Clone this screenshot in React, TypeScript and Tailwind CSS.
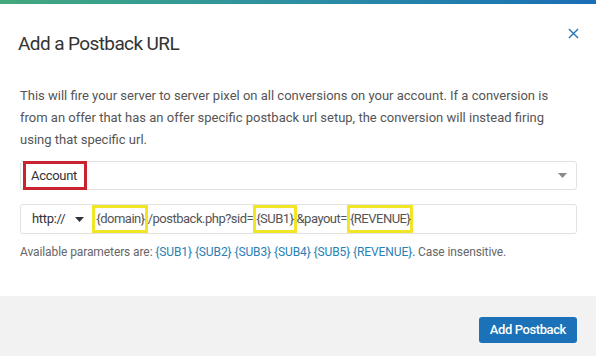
import React from 'react';

const Caret = ({ color }: { color: string }) => (
  <svg width="9" height="5" viewBox="0 0 9 5" className="shrink-0">
    <path d="M0 0 L9 0 L4.5 5 Z" fill={color} />
  </svg>
);

export default function App() {
  const params = ['{SUB1}', '{SUB2}', '{SUB3}', '{SUB4}', '{SUB5}', '{REVENUE}'];

  return (
    <div
      className="w-[596px] h-[356px] bg-white flex flex-col overflow-hidden"
      style={{ fontFamily: 'Roboto, "Liberation Sans", sans-serif' }}
    >
      {/* top accent bar */}
      <div className="h-[4px] w-full bg-gradient-to-r from-[#43a87c] via-[#2d8fa3] to-[#1c6db5]" />

      {/* header */}
      <div className="flex items-start justify-between pl-[18px] pr-[17px] pt-[27px]">
        <h3 className="text-[19px] leading-[26px] text-[#333] tracking-[-0.6px]">Add a Postback URL</h3>
        <button className="-mt-[3px] text-[#2c78b8]">
          <svg width="11" height="11" viewBox="0 0 12 12">
            <path d="M1 1 L11 11 M11 1 L1 11" stroke="currentColor" strokeWidth="1.6" fill="none" />
          </svg>
        </button>
      </div>

      {/* body */}
      <div className="px-[20px] pt-[28px] flex flex-col">
        <p className="text-[13px] leading-[22px] text-[#555]">
          This will fire your server to server pixel on all conversions on your account. If a conversion is
          <br />
          from an offer that has an offer specific postback url setup, the conversion will instead firing
          <br />
          using that specific url.
        </p>

        {/* account select */}
        <div className="mt-[10px] h-[29px] w-[557px] border border-[#e2e2e2] rounded-[3px] flex items-stretch justify-between">
          <span className="ml-[2px] -my-px border-[3px] border-[#c8232f] flex items-center pl-[5px] pr-[7px] text-[13px] text-[#333] tracking-[-0.3px]">
            Account
          </span>
          <span className="flex items-center pr-[9px]">
            <Caret color="#8a8a8a" />
          </span>
        </div>

        {/* url input */}
        <div className="mt-[14px] h-[30px] w-[557px] border border-[#e2e2e2] rounded-[3px] flex items-stretch text-[13px] tracking-[-0.5px]">
          <span className="flex items-center pl-[11px] text-[#333] tracking-[-0.3px]">http://</span>
          <span className="flex items-center ml-[10px] mr-[8px]">
            <Caret color="#333" />
          </span>
          <span className="flex items-center">
            <span className="self-stretch flex items-center border-[3px] border-[#f1e526] pl-[1px] text-[#555]">{'{domain}'}</span>
            <span className="text-[#555]">/postback.php?sid=</span>
            <span className="self-stretch flex items-center border-[3px] border-[#f1e526] text-[#555]">{'{SUB1}'}</span>
            <span className="text-[#555]">&amp;payout=</span>
            <span className="self-stretch flex items-center border-[3px] border-[#f1e526] text-[#555]">{'{REVENUE}'}</span>
          </span>
        </div>

        {/* help */}
        <p className="mt-[10px] text-[12px] leading-[16px] text-[#666] tracking-[-0.1px]">
          Available parameters are:{' '}
          {params.map((p, i) => (
            <span key={p} className="text-[#2a7fb4]">
              {p}
              {i < params.length - 1 ? ' ' : ''}
            </span>
          ))}
          . Case insensitive.
        </p>
      </div>

      {/* footer */}
      <div className="mt-auto h-[60px] bg-[#f2f2f2] flex items-start justify-end pr-[19px] pt-[21px]">
        <button className="h-[26px] px-[11px] rounded-[3px] bg-[#1b72b8] text-white text-[13px] font-medium tracking-[-0.4px]">
          Add Postback
        </button>
      </div>
    </div>
  );
}
